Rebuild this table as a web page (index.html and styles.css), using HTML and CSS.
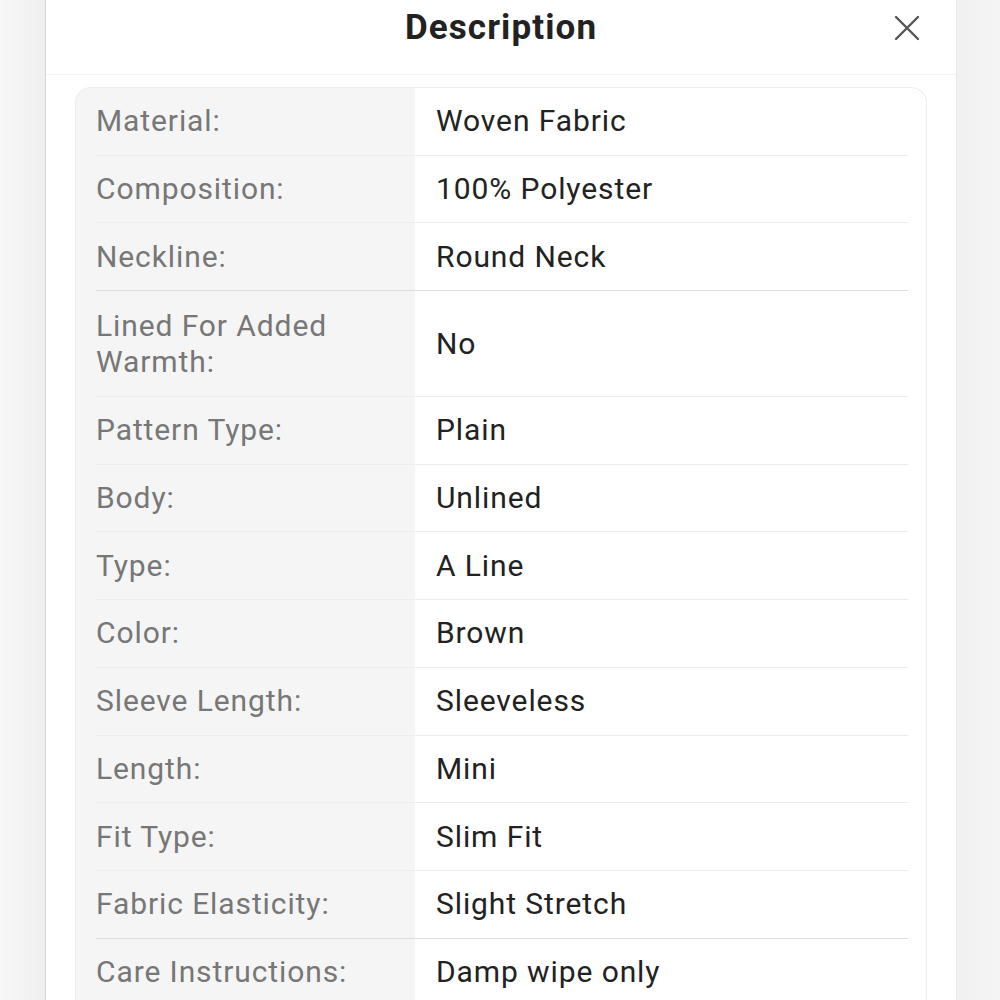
FILE: index.html
```html
<!DOCTYPE html>
<html lang="en">
<head>
    <meta charset="UTF-8">
    <meta name="viewport" content="width=device-width, initial-scale=1.0">
    <title>Description</title>
    <link rel="stylesheet" href="styles.css">
</head>
<body>
    <div class="sheet">
        <div class="sheet-header">
            <h2 class="sheet-title">Description</h2>
            <button class="close-btn" aria-label="Close">
                <svg width="26" height="26" viewBox="0 0 26 26">
                    <path d="M2 2 L24 24 M24 2 L2 24" stroke="#555" stroke-width="2.4" stroke-linecap="round" fill="none"/>
                </svg>
            </button>
        </div>

        <div class="attr-table">
            <div class="attr-row"><div class="attr-name">Material:</div><div class="attr-value">Woven Fabric</div></div>
            <div class="attr-row"><div class="attr-name">Composition:</div><div class="attr-value">100% Polyester</div></div>
            <div class="attr-row strong"><div class="attr-name">Neckline:</div><div class="attr-value">Round Neck</div></div>
            <div class="attr-row tall"><div class="attr-name">Lined For Added Warmth:</div><div class="attr-value">No</div></div>
            <div class="attr-row"><div class="attr-name">Pattern Type:</div><div class="attr-value">Plain</div></div>
            <div class="attr-row"><div class="attr-name">Body:</div><div class="attr-value">Unlined</div></div>
            <div class="attr-row"><div class="attr-name">Type:</div><div class="attr-value">A Line</div></div>
            <div class="attr-row"><div class="attr-name">Color:</div><div class="attr-value">Brown</div></div>
            <div class="attr-row"><div class="attr-name">Sleeve Length:</div><div class="attr-value">Sleeveless</div></div>
            <div class="attr-row"><div class="attr-name">Length:</div><div class="attr-value">Mini</div></div>
            <div class="attr-row"><div class="attr-name">Fit Type:</div><div class="attr-value">Slim Fit</div></div>
            <div class="attr-row strong"><div class="attr-name">Fabric Elasticity:</div><div class="attr-value">Slight Stretch</div></div>
            <div class="attr-row"><div class="attr-name">Care Instructions:</div><div class="attr-value">Damp wipe only</div></div>
        </div>
    </div>
</body>
</html>
```

FILE: styles.css
```css
html, body {
    margin: 0;
    height: 100%;
    overflow: hidden;
}
body {
    font-family: Roboto, "Liberation Sans", Arial, sans-serif;
    background: linear-gradient(to right, #f7f7f7 0, #efefef 46px, #f1f1f1 960px, #f4f4f4 100%);
}
.sheet {
    margin: 0 44px 0 46px;
    min-height: 100%;
    background: #fff;
    box-shadow: -1px 0 0 #d6d6d6, 1px 0 0 #e6e6e6;
}
.sheet-header {
    position: relative;
    height: 74px;
    border-bottom: 1px solid #f2f2f2;
    display: flex;
    align-items: center;
    justify-content: center;
}
.sheet-title {
    margin: 0 0 20px;
    font-size: 35px;
    letter-spacing: 1.1px;
    font-weight: 700;
    color: #222;
}
.close-btn {
    position: absolute;
    right: 36px;
    top: 15px;
    padding: 0;
    border: none;
    background: none;
    display: flex;
}
.attr-table {
    margin: 12px 29px 0 29px;
    padding: 0 18px 0 20px;
    border: 1px solid #ededed;
    border-bottom: none;
    border-radius: 16px 16px 0 0;
    background: linear-gradient(to right, #f5f5f5 339px, #fff 339px);
}
.attr-row {
    display: flex;
    border-bottom: 1px solid #ececec;
    font-size: 30px;
    letter-spacing: 0.9px;
    line-height: 36px;
}
.attr-row.strong {
    border-bottom-color: #dedede;
}
.attr-name {
    width: 320px;
    flex: none;
    box-sizing: border-box;
    padding: 15.35px 16px 15.35px 0;
    color: #777;
}
.attr-row.tall .attr-name {
    padding-top: 16.5px;
    padding-bottom: 16.5px;
}
.attr-value {
    flex: 1;
    padding: 15.35px 0 15.35px 20px;
    color: #222;
    display: flex;
    align-items: center;
}
```
